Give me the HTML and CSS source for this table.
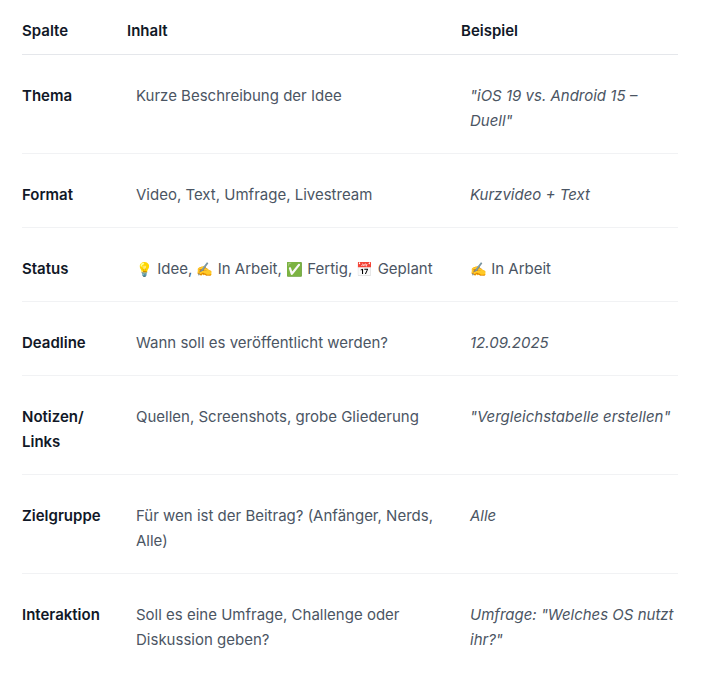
FILE: index.html
```html
<!DOCTYPE html>
<html lang="de">
<head>
<meta charset="utf-8">
<link rel="stylesheet" href="styles.css">
</head>
<body>
<div class="wrap">
<table class="plan">
  <colgroup><col class="c1"><col class="c2"><col class="c3"></colgroup>
  <thead>
    <tr><th>Spalte</th><th>Inhalt</th><th class="h3">Beispiel</th></tr>
  </thead>
  <tbody>
    <tr><td>Thema</td><td>Kurze Beschreibung der Idee</td><td><em>"iOS 19 vs. Android 15 – Duell"</em></td></tr>
    <tr><td>Format</td><td>Video, Text, Umfrage, Livestream</td><td><em>Kurzvideo + Text</em></td></tr>
    <tr><td>Status</td><td><span class="emo">💡</span> Idee, <span class="emo">✍️</span> In Arbeit, <span class="emo">✅</span> Fertig, <span class="emo">📅</span> Geplant</td><td><span class="emo">✍️</span> In Arbeit</td></tr>
    <tr><td>Deadline</td><td>Wann soll es veröffentlicht werden?</td><td><em>12.09.2025</em></td></tr>
    <tr><td>Notizen/ Links</td><td>Quellen, Screenshots, grobe Gliederung</td><td><em>"Vergleichstabelle erstellen"</em></td></tr>
    <tr><td>Zielgruppe</td><td>Für wen ist der Beitrag? (Anfänger, Nerds, Alle)</td><td><em>Alle</em></td></tr>
    <tr><td>Interaktion</td><td>Soll es eine Umfrage, Challenge oder Diskussion geben?</td><td><em>Umfrage: "Welches OS nutzt ihr?"</em></td></tr>
  </tbody>
</table>
</div>
</body>
</html>
```
FILE: styles.css
```css
html, body {
  margin: 0;
  padding: 0;
  background: #ffffff;
}
body {
  font-family: Inter, "Noto Sans", "Liberation Sans", sans-serif;
  font-size: 15px;
  line-height: 25px;
  color: #4b5563;
}
.wrap {
  padding: 0 42px 0 22px;
}
.plan {
  width: 656px;
  table-layout: fixed;
  border-collapse: collapse;
}
.c1 { width: 105px; }
.c2 { width: 333px; }
.c3 { width: 218px; }
.plan th {
  text-align: left;
  font-weight: 600;
  color: #111827;
  padding: 18px 0 11px 0;
  vertical-align: bottom;
}
.plan th.h3 { padding-left: 1px; }
.plan thead tr {
  border-bottom: 1px solid #e5e7eb;
}
.plan td {
  padding: 28px 9px 20px 9px;
  vertical-align: top;
}
.plan td:first-child {
  padding-left: 0;
  font-weight: 600;
  color: #111827;
}
.plan td:last-child {
  padding-left: 10px;
  padding-right: 0;
}
.plan tbody tr {
  border-bottom: 1px solid #f1f2f4;
}
.plan tbody tr:last-child {
  border-bottom: none;
}
.plan em {
  font-style: italic;
}
.emo {
  font-size: 13.5px;
  line-height: 1;
}
```
